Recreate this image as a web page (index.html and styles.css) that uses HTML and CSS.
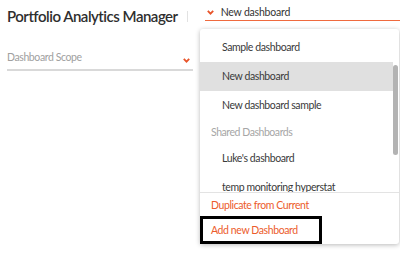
FILE: index.html
```html
<!DOCTYPE html>
<html>
<head>
<meta charset="utf-8">
<link rel="stylesheet" href="styles.css">
</head>
<body>
<div class="page">
  <div class="header">
    <h1 class="title">Portfolio Analytics Manager</h1>
    <div class="divider"></div>
    <div class="dash-select">
      <svg class="chev" width="7" height="5" viewBox="0 0 7 5"><path d="M0.8 0.8 L3.5 3.6 L6.2 0.8" fill="none" stroke="#e8542a" stroke-width="1.8"/></svg>
      <span class="dash-value">New dashboard</span>
    </div>
  </div>
  <div class="scope">
    <span class="scope-label">Dashboard Scope</span>
    <svg class="chev" width="7" height="5" viewBox="0 0 7 5"><path d="M0.8 0.8 L3.5 3.6 L6.2 0.8" fill="none" stroke="#e8542a" stroke-width="1.8"/></svg>
  </div>

  <div class="menu">
    <div class="menu-body">
      <ul class="menu-list">
        <li class="item">Sample dashboard</li>
        <li class="item active">New dashboard</li>
        <li class="item">New dashboard sample</li>
        <li class="group">Shared Dashboards</li>
        <li class="item">Luke's dashboard</li>
        <li class="item">temp monitoring hyperstat</li>
      </ul>
      <div class="track"><div class="thumb"></div></div>
    </div>
    <div class="menu-footer">
      <div class="action">Duplicate from Current</div>
      <div class="action boxed">Add new Dashboard</div>
    </div>
  </div>
</div>
</body>
</html>
```

FILE: styles.css
```css
* { box-sizing: border-box; }
html, body {
  margin: 0;
  padding: 0;
  background: #fff;
  font-family: Lato, "Noto Sans", sans-serif;
  width: 400px;
  height: 277px;
  overflow: hidden;
}
.page {
  position: relative;
  width: 400px;
  height: 277px;
}
.header {
  display: flex;
  align-items: flex-start;
  padding: 5px 0 0 7px;
  height: 29px;
}
.title {
  margin: 0;
  font-size: 15px;
  font-weight: 600;
  letter-spacing: -0.5px;
  color: #2e2e2e;
  line-height: 22px;
  white-space: nowrap;
}
.divider {
  width: 1px;
  height: 11px;
  background: #e2e2e2;
  margin: 6px 0 0 9px;
}
.dash-select {
  flex: 1;
  display: flex;
  align-items: center;
  gap: 7px;
  margin-left: 17px;
  height: 17px;
  border-bottom: 1px solid #ef6a3e;
  padding-left: 2px;
  margin-top: -1px;
}
.dash-value {
  font-size: 10.5px;
  letter-spacing: -0.2px;
  color: #333;
}
.chev { display: block; flex: none; }
.scope {
  display: flex;
  align-items: center;
  justify-content: space-between;
  width: 186px;
  margin: 20px 0 0 7px;
  padding: 0 3px 4px 0;
  height: 22px;
  border-bottom: 2px solid #d9d9d9;
}
.scope-label {
  font-size: 10.5px;
  letter-spacing: -0.4px;
  color: #a0a0a0;
}
.scope .chev { margin-top: 6px; }
.menu {
  position: absolute;
  left: 200px;
  top: 29px;
  width: 199px;
  background: #fff;
  box-shadow: 0 1px 5px rgba(0,0,0,0.28);
  border-radius: 3px;
}
.menu-body {
  display: flex;
  height: 163px;
  overflow: hidden;
}
.menu-list {
  list-style: none;
  margin: 0;
  padding: 4px 0 0 0;
  flex: 1;
}
.item {
  height: 29px;
  line-height: 29px;
  padding-left: 22px;
  font-size: 10.5px;
  letter-spacing: -0.4px;
  color: #3a3a3a;
  white-space: nowrap;
}
.item.active { background: #e0e0e0; }
.group {
  height: 24px;
  line-height: 24px;
  padding-left: 11px;
  font-size: 10.5px;
  letter-spacing: -0.45px;
  color: #a6a6a6;
}
.track {
  width: 6px;
  flex: none;
  padding-top: 36px;
  padding-right: 1px;
}
.thumb {
  width: 5px;
  height: 90px;
  background: #b3b3b3;
  border-radius: 3px;
}
.menu-footer {
  border-top: 1px solid #e3e3e3;
}
.action {
  height: 23px;
  line-height: 25px;
  padding-left: 11px;
  font-size: 10.5px;
  letter-spacing: -0.4px;
  color: #ec5c2c;
}
.action.boxed {
  width: 122px;
  height: 28px;
  line-height: 22px;
  border: 3px solid #000;
  padding-left: 8px;
}
```
